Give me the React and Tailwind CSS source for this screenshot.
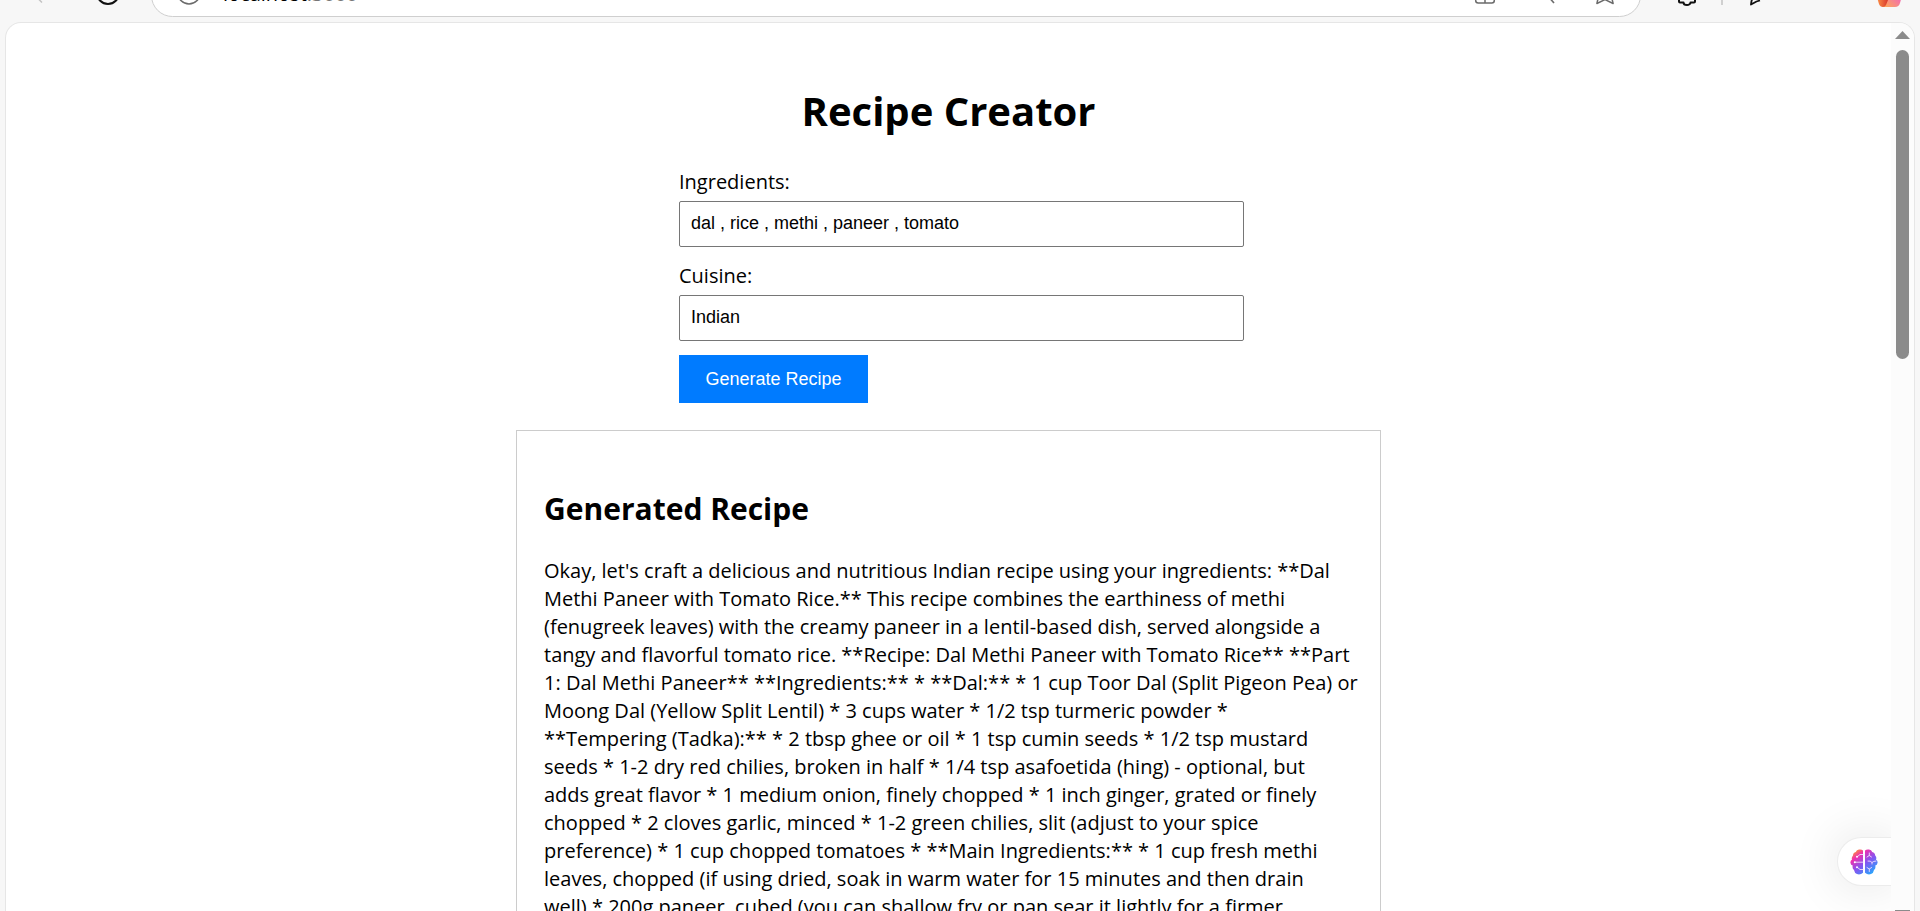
import React, { useState } from "react";

const recipe = `Okay, let's craft a delicious and nutritious Indian recipe using your ingredients: **Dal
Methi Paneer with Tomato Rice.** This recipe combines the earthiness of methi
(fenugreek leaves) with the creamy paneer in a lentil-based dish, served alongside a
tangy and flavorful tomato rice. **Recipe: Dal Methi Paneer with Tomato Rice** **Part
1: Dal Methi Paneer** **Ingredients:** * **Dal:** * 1 cup Toor Dal (Split Pigeon Pea) or
Moong Dal (Yellow Split Lentil) * 3 cups water * 1/2 tsp turmeric powder *
**Tempering (Tadka):** * 2 tbsp ghee or oil * 1 tsp cumin seeds * 1/2 tsp mustard
seeds * 1-2 dry red chilies, broken in half * 1/4 tsp asafoetida (hing) - optional, but
adds great flavor * 1 medium onion, finely chopped * 1 inch ginger, grated or finely
chopped * 2 cloves garlic, minced * 1-2 green chilies, slit (adjust to your spice
preference) * 1 cup chopped tomatoes * **Main Ingredients:** * 1 cup fresh methi
leaves, chopped (if using dried, soak in warm water for 15 minutes and then drain
well) * 200g paneer, cubed (you can shallow fry or pan sear it lightly for a firmer`;

function BrowserBar() {
  return (
    <header className="flex h-[22px] shrink-0 items-end overflow-hidden">
      <div className="flex h-12 w-full shrink-0 items-start pr-[17px]">
        <svg className="ml-[30px] mt-[5px] size-6 shrink-0" viewBox="0 0 24 24" fill="none" stroke="#c4c4c4" strokeWidth="1.5">
          <path d="M12 23.5 3 14.5 12 5.5" />
        </svg>
        <svg className="ml-[42px] mt-[7px] size-6 shrink-0" viewBox="0 0 24 24" fill="none" stroke="#111" strokeWidth="2">
          <circle cx="12" cy="12" r="11" />
        </svg>
        <div className="ml-[31px] flex h-[43px] min-w-0 flex-1 items-start rounded-full border border-[#cfcfcf] bg-white pl-[25px] pr-[23px]">
          <svg className="mt-1.5 size-6 shrink-0" viewBox="0 0 24 24" fill="none" stroke="#6b6b6b" strokeWidth="1.6">
            <circle cx="12" cy="12" r="11" />
          </svg>
          <span className="ml-[22px] mt-[7px] text-xl/6 text-black">
            localhost<span className="text-[#767676]">:3000</span>
          </span>
          <div className="ml-auto mt-[7px] flex gap-9">
            <svg className="size-6" viewBox="0 0 24 24" fill="none" stroke="#6b6b6b" strokeWidth="1.5">
              <rect x="2.7" y="3" width="18.6" height="18" rx="2.5" />
              <path d="M12 3v18" />
            </svg>
            <svg className="size-6" viewBox="0 0 24 24" fill="none" stroke="#6b6b6b" strokeWidth="1.6">
              <circle cx="9" cy="8" r="7" />
              <path d="m14 13 7 8" />
            </svg>
            <svg className="size-6" viewBox="0 0 24 24" fill="none" stroke="#6b6b6b" strokeWidth="1.5" strokeLinejoin="round">
              <path d="m12 2 3 6.2 6.6 1-3.200 4.900 1.700 7.400-8.100-3.900-8.100 3.900 1.700-7.400L2.400 9.200 9 8.200z" />
            </svg>
          </div>
        </div>
        <svg className="ml-[34px] mt-2 size-6 shrink-0" viewBox="0 0 24 24" fill="none" stroke="#111" strokeWidth="2" strokeLinejoin="round">
          <path d="M4 5h5a3 3 0 0 1 6 0h5v5a3 3 0 0 1 0 6v3.500q0 1-1 1h-3.500a3.500 2.500 0 0 1-7 0H5q-1 0-1-1V16h2a3 3 0 0 0 0-6H4z" />
        </svg>
        <div className="ml-[22px] h-[31px] w-0.5 shrink-0 bg-[#d0d0d0]" />
        <svg className="ml-5 mt-2 size-6 shrink-0" viewBox="0 0 24 24" fill="none" stroke="#111" strokeWidth="1.8" strokeLinejoin="round">
          <path d="M17 18.500 13.500 19.500 8 22.500 8.500 19 10 15" />
        </svg>
        <svg className="ml-[108px] mt-[5px] size-7 shrink-0" viewBox="0 0 28 28">
          <defs>
            <linearGradient id="ribbonRight" x1="1" y1="0" x2="0" y2="1">
              <stop offset="0.4" stopColor="#f472a8" />
              <stop offset="1" stopColor="#ffb04d" />
            </linearGradient>
            <linearGradient id="ribbonLeft" x1="0" y1="0" x2="1" y2="0">
              <stop offset="0" stopColor="#ff9a4a" />
              <stop offset="1" stopColor="#d9372c" />
            </linearGradient>
          </defs>
          <path d="M13 8h14q1 3 0 9l-2 7q-1 4-5 4H7q3-1 4-7z" fill="url(#ribbonRight)" />
          <path d="M1 10h12v11l-2 5q-1 2-3 2-3 0-4-3L2.500 20z" fill="url(#ribbonLeft)" />
        </svg>
      </div>
    </header>
  );
}

function Scrollbar() {
  return (
    <div className="flex w-[23px] shrink-0 flex-col items-center bg-[#fcfcfc] pt-2" aria-hidden="true">
      <svg className="h-2 w-[15px] shrink-0" viewBox="0 0 15 8" fill="#8b8b8b">
        <path d="M7.500 0 15 8H0z" />
      </svg>
      <div className="mt-[11px] h-[309px] w-[13px] shrink-0 rounded-full bg-[#8b8b8b]" />
      <div className="mt-auto h-px w-[15px] shrink-0 bg-[#8b8b8b]" />
    </div>
  );
}

function AssistantButton() {
  return (
    <button
      aria-label="Assistant"
      className="absolute bottom-[25px] right-0 flex h-[49px] w-[54px] items-center rounded-l-full border border-r-0 border-[#ececec] bg-white pl-3 shadow-[0_0_50px_rgba(0,0,0,0.12)]"
    >
      <svg className="h-[26px] w-7" viewBox="0 0 28 26">
        <defs>
          <linearGradient id="brain" x1="0.1" y1="0" x2="0.9" y2="1">
            <stop offset="0.02" stopColor="#ffa51f" />
            <stop offset="0.25" stopColor="#ef2fae" />
            <stop offset="0.55" stopColor="#8654f0" />
            <stop offset="1" stopColor="#16b5ff" />
          </linearGradient>
        </defs>
        <path
          fill="url(#brain)"
          d="M13 1.500Q11.500 0 9 .5 6.500.7 5.800 3 3 3.500 3 6.500 1.200 8.500 2 10.500 0 12 .5 14q.3 2 2.200 2.600Q2 19.500 4 21q.5 3.200 3 4 3 1.200 6-1.200ZM15 1.500Q16.500 0 19 .5q2.500.2 3.200 2.500Q25 3.500 25.200 6.500 27 8.500 26 10.500q2 1.500 1.500 3.500-.3 2-2.200 2.600.7 2.900-1.300 4.400-.5 3.200-3 4-3 1.200-6-1.200Z"
        />
        <g fill="none" stroke="#f3dcff" strokeWidth="0.900" strokeLinecap="round" strokeLinejoin="round">
          <path d="M13 5.500h-3L7.500 7.500M13 13.200H5M13 20.500h-3L7.500 18.500M17 8l2.300-1.500L21.500 8M19.300 6.500V4M18 12q2.500-.5 4 1.500 1.500-1.500 4-1.500M22 13.500v1.500M17 18.500l2.300 1.500 2.300-1.500M19.300 20v2.500" />
        </g>
        <g fill="#fff">
          <circle cx="7" cy="7.800" r="1" />
          <circle cx="4.800" cy="13.200" r="1" />
          <circle cx="7" cy="18.200" r="1" />
        </g>
      </svg>
    </button>
  );
}

const labelStyle = "mb-[5px] block text-xl/7";
const inputStyle =
  "block h-[46px] w-[565px] rounded-xs border border-[#767676] bg-white px-[11px] pb-px font-['Liberation_Sans',sans-serif] text-lg text-black outline-none";

export default function App() {
  const [ingredients, setIngredients] = useState("dal , rice , methi , paneer , tomato");
  const [cuisine, setCuisine] = useState("Indian");
  return (
    <div className="flex h-screen flex-col overflow-hidden bg-[#f7f7f7] font-['Open_Sans',sans-serif] text-black">
      <BrowserBar />
      <div className="mx-[5px] flex min-h-0 flex-1 overflow-hidden rounded-t-2xl border border-b-0 border-[#e6e6e6] bg-white">
        <main className="relative flex min-w-0 flex-1 flex-col items-center overflow-hidden pt-14">
          <h1 className="text-[40px]/[64px] font-bold">Recipe Creator</h1>
          <form className="mt-[25px] w-[539px]" onSubmit={(e) => e.preventDefault()}>
            <label htmlFor="ingredients" className={labelStyle}>Ingredients:</label>
            <input id="ingredients" className={inputStyle} value={ingredients} onChange={(e) => setIngredients(e.target.value)} />
            <label htmlFor="cuisine" className={`mt-[15px] ${labelStyle}`}>Cuisine:</label>
            <input id="cuisine" className={inputStyle} value={cuisine} onChange={(e) => setCuisine(e.target.value)} />
            <button className="mt-3.5 block h-12 w-[189px] bg-[#007bff] font-['Liberation_Sans',sans-serif] text-lg text-white">
              Generate Recipe
            </button>
          </form>
          <section className="mt-[27px] w-[865px] border border-[#ccc] px-[27px] pt-[54px]">
            <h2 className="text-[30px]/[48px] font-bold">Generated Recipe</h2>
            <p className="mt-6 whitespace-pre text-xl/7">{recipe}</p>
          </section>
          <AssistantButton />
        </main>
        <Scrollbar />
      </div>
    </div>
  );
}
